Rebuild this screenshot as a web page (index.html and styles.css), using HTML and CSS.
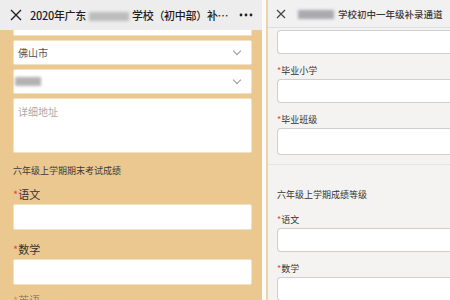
FILE: index.html
```html
<!DOCTYPE html>
<html lang="zh-CN">
<head>
    <meta charset="UTF-8">
    <title>补录通道</title>
    <link rel="stylesheet" href="styles.css">
</head>
<body>
    <div class="shots">
        <div class="shot shot-left">
            <div class="topbar">
                <span class="close">
                    <svg width="12" height="12" viewBox="0 0 12 12"><path d="M1 1L11 11M11 1L1 11" stroke="#222" stroke-width="1.4"/></svg>
                </span>
                <span class="title">2020年广东<span class="blur w40"></span>学校（初中部）补…</span>
                <span class="more">
                    <svg width="14" height="4" viewBox="0 0 14 4"><circle cx="2" cy="2" r="1.4" fill="#222"/><circle cx="7" cy="2" r="1.4" fill="#222"/><circle cx="12" cy="2" r="1.4" fill="#222"/></svg>
                </span>
            </div>
            <div class="form-orange">
                <div class="card card-cut"></div>
                <div class="card card-select">佛山市<span class="chev"></span></div>
                <div class="card card-select"><span class="blur w26 dark"></span><span class="chev"></span></div>
                <div class="card card-area"><span class="ph">详细地址</span></div>
                <div class="group-title">六年级上学期期末考试成绩</div>
                <div class="label"><i>*</i>语文</div>
                <div class="card card-input"></div>
                <div class="label"><i>*</i>数学</div>
                <div class="card card-input"></div>
                <div class="label faded"><i>*</i>英语</div>
            </div>
        </div>
        <div class="shot shot-right">
            <div class="topbar light">
                <span class="close">
                    <svg width="10" height="10" viewBox="0 0 10 10"><path d="M1 1L9 9M9 1L1 9" stroke="#444" stroke-width="1.2"/></svg>
                </span>
                <span class="title small"><span class="blur w36 bar"></span>学校初中一年级补录通道</span>
            </div>
            <div class="form-grey">
                <div class="field"></div>
                <div class="label-sm"><i>*</i>毕业小学</div>
                <div class="field"></div>
                <div class="label-sm"><i>*</i>毕业班级</div>
                <div class="field tall"></div>
                <div class="divider"></div>
                <div class="group-title-sm">六年级上学期成绩等级</div>
                <div class="label-sm"><i>*</i>语文</div>
                <div class="field"></div>
                <div class="label-sm"><i>*</i>数学</div>
                <div class="field"></div>
            </div>
        </div>
    </div>
</body>
</html>
```

FILE: styles.css
```css
* {
    margin: 0;
    padding: 0;
    box-sizing: border-box;
}

body {
    width: 450px;
    height: 300px;
    overflow: hidden;
    background: #fbfbfb;
    font-family: "Noto Sans CJK SC", "Noto Sans", sans-serif;
    color: #333;
}

.shots {
    display: flex;
    gap: 4px;
    height: 300px;
}

.shot {
    height: 300px;
    overflow: hidden;
}

.shot-left {
    width: 262px;
    background: #ebc88f;
}

.shot-right {
    flex: 1;
    background: #f4f3f1;
    border-left: 2px solid #ecd3a8;
}

/* top bars */
.topbar {
    height: 30px;
    display: flex;
    align-items: center;
    background: #ededed;
    padding: 0 9px 0 10px;
    white-space: nowrap;
}

.topbar .close {
    display: flex;
    width: 12px;
    margin-right: 8px;
}

.topbar .title {
    flex: 1;
    min-width: 0;
    font-size: 11px;
    font-weight: 500;
    color: #1e1e1e;
    letter-spacing: -0.3px;
}

.topbar .more {
    display: flex;
    margin-left: 4px;
}

.topbar.light {
    height: 28px;
    background: #f1f1f1;
    border-bottom: 1px solid #ddd;
    padding-left: 8px;
}

.topbar.light .close {
    width: 10px;
    margin-right: 12px;
}

.title.small {
    font-size: 9.5px;
    color: #3a3a3a;
    font-weight: 500;
    letter-spacing: 0;
}

.blur {
    display: inline-block;
    height: 9px;
    vertical-align: -1px;
    background: #bdbdbd;
    filter: blur(1.5px);
}

.w40 { width: 40px; margin: 0 3px; }
.w26 { width: 26px; }
.w36 { width: 36px; margin-right: 4px; }
.blur.dark { background: #b3b3b3; margin-left: -3px; }
.blur.bar { background: #a9a9ae; }

/* left form */
.form-orange {
    padding: 0 10px 0 13px;
}

.card {
    background: #fff;
    border: 1px solid #f2e2c4;
    border-radius: 2px;
    margin-bottom: 4px;
}

.card-cut {
    height: 6px;
    border-top: none;
    border-radius: 0 0 2px 2px;
}

.card-select {
    height: 25px;
    display: flex;
    align-items: center;
    justify-content: space-between;
    padding: 0 11px 0 4px;
    font-size: 10px;
    color: #555;
}

.chev {
    width: 6px;
    height: 6px;
    border-right: 1px solid #999;
    border-bottom: 1px solid #999;
    transform: rotate(45deg);
    margin-top: -3px;
}

.card-area {
    height: 55px;
    padding: 5px 4px;
    font-size: 10px;
    color: #aaa;
}

.group-title {
    margin-top: 11px;
    font-size: 9px;
    color: #3a3a3a;
    line-height: 14px;
}

.label {
    margin-top: 8px;
    font-size: 11px;
    line-height: 16px;
    color: #333;
}

.card-input + .label {
    margin-top: 11px;
}

.label i, .label-sm i {
    font-style: normal;
    color: #d9512c;
}

.card-input {
    height: 26px;
    margin-top: 2px;
    margin-bottom: 0;
}

.card-input + .label.faded {
    margin-top: 7px;
    opacity: 0.5;
}

/* right form */
.form-grey {
    padding: 2px 0 0 9px;
}

.field {
    height: 24px;
    margin-right: -6px;
    background: #fff;
    border: 1px solid #cfcfcf;
    border-right: none;
    border-radius: 4px 0 0 4px;
}

.field.tall {
    height: 27px;
}

.label-sm {
    font-size: 9px;
    line-height: 12px;
    margin: 11px 0 2px;
    color: #333;
}

.divider {
    height: 1px;
    margin: 9px 0 0 -9px;
    background: #e6e5e2;
}

.group-title-sm {
    font-size: 9px;
    line-height: 12px;
    margin-top: 24px;
    color: #333;
}

.group-title-sm + .label-sm {
    margin-top: 13px;
}
```
